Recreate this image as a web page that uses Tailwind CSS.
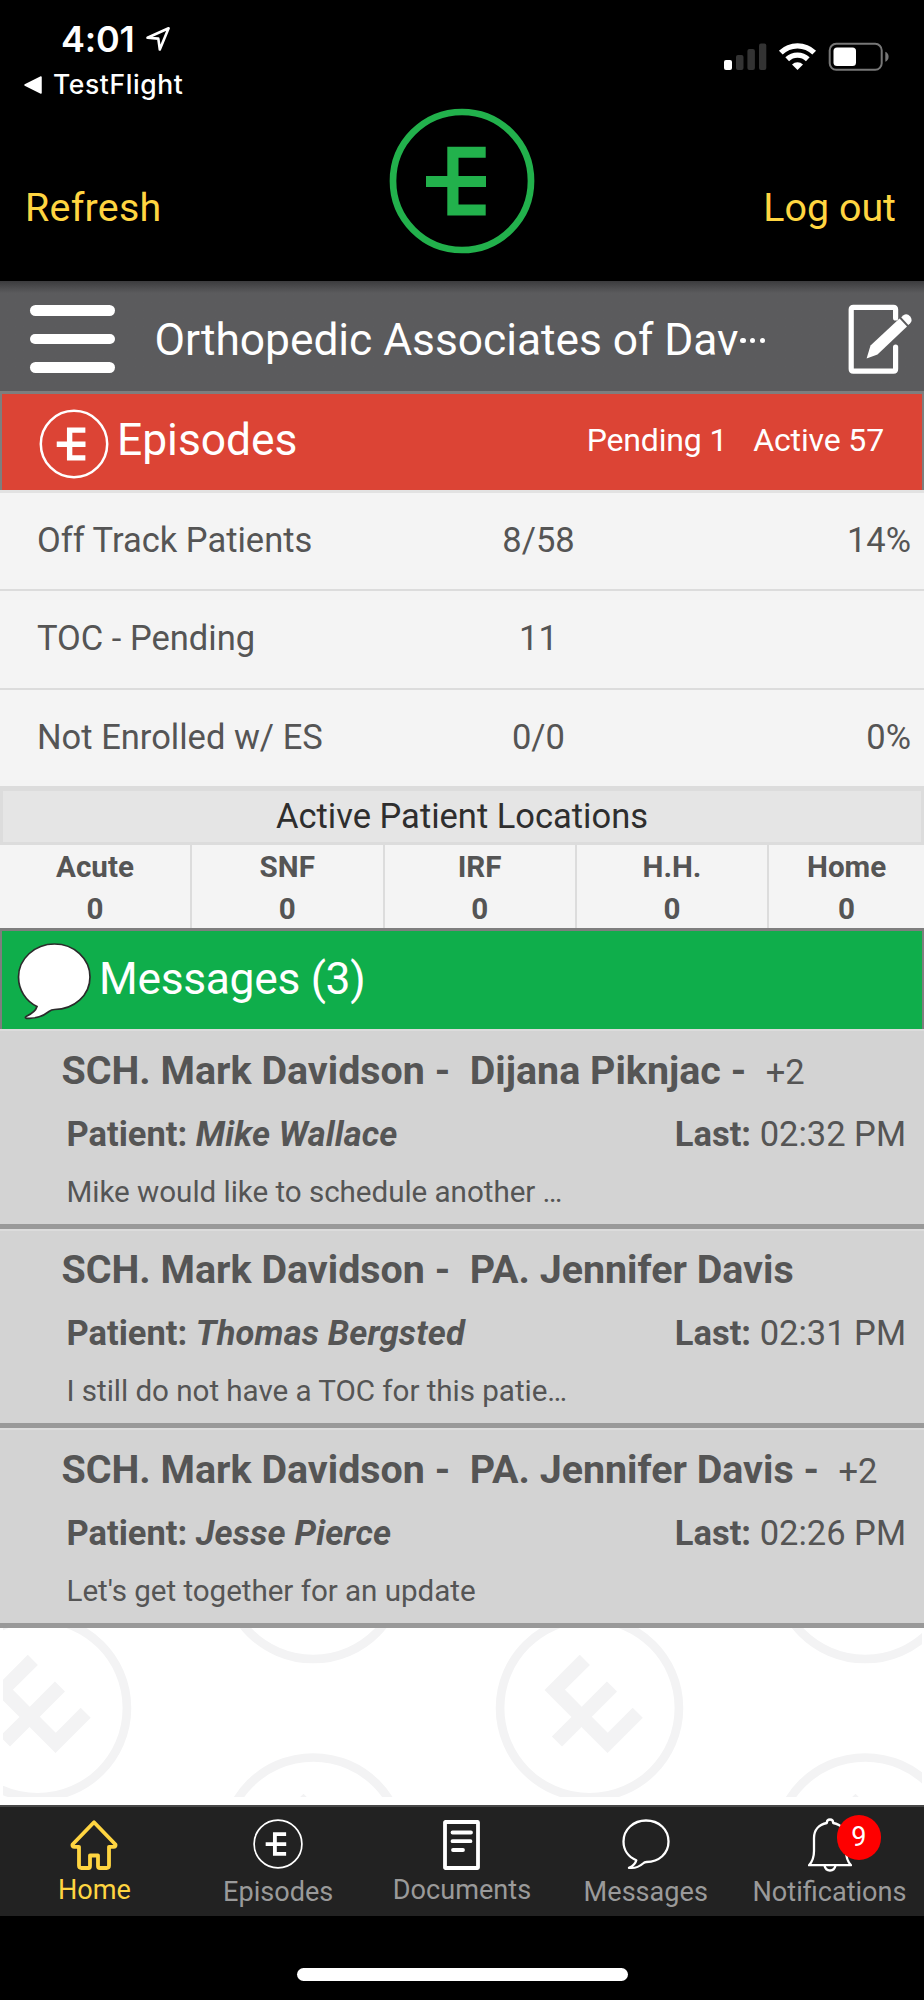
<!DOCTYPE html>
<html lang="en">
<head>
<meta charset="utf-8">
<title>Episodes</title>
<script src="https://cdn.jsdelivr.net/npm/@tailwindcss/browser@4"></script>
</head>
<body class="w-[924px] h-[2000px] overflow-hidden bg-black font-['Roboto',sans-serif] text-[#555] text-[34.5px] leading-none">
<svg class="hidden">
  <symbol id="mark" viewBox="-73 -73 146 146" overflow="visible">
    <path d="M-14.7-34.3H23.7V-23.3H-3.5V-5H24V6H-3.5V23.4H23.7V34.4H-14.7V6H-36V-5H-14.7Z" fill="currentColor"/>
  </symbol>
</svg>
<div class="flex flex-col h-[2000px]">
  <header class="h-[281px] shrink-0 bg-black text-white flex flex-col">
    <div class="h-[105px] flex justify-between">
      <div class="font-['Inter',sans-serif] pt-[18.5px] pl-6">
        <div class="flex items-center pl-[37px] h-10">
          <span class="text-[36px] font-semibold w-[84px] whitespace-nowrap tracking-[-0.2px]">4:01</span>
          <svg class="w-[26px] h-[26px]" viewBox="0 0 26 26"><path d="M2.5 11.8 23.6 2.3 14.8 23.5 13.3 12.6Z" fill="none" stroke="#fff" stroke-width="2.6" stroke-linejoin="round"/></svg>
        </div>
        <div class="flex items-center h-[52px] gap-[11px]">
          <svg class="w-[18px] h-[18px]" viewBox="0 0 18 18"><path d="M1 9 17 1V17Z" fill="#fff" stroke="#fff" stroke-width="1.5" stroke-linejoin="round"/></svg>
          <span class="text-[26.5px] font-medium tracking-[0.6px]">TestFlight</span>
        </div>
      </div>
      <div class="flex pt-[42px] pr-[34px]">
        <svg class="w-[166px] h-[30px]" viewBox="0 0 166 30">
          <rect x="0" y="18" width="8" height="10" rx="2" fill="#fff"/>
          <g fill="#333"><rect x="12" y="13" width="7.5" height="15" rx="2"/><rect x="23.4" y="7" width="7.5" height="21" rx="2"/><rect x="35" y="1.5" width="7.3" height="26.5" rx="2"/></g>
          <g fill="none" stroke="#fff" stroke-width="5.4"><path d="M56.8 10.6A24 24 0 0 1 90.2 10.6"/><path d="M63.2 17.2A15 15 0 0 1 83.8 17.2"/></g>
          <path d="M73.5 28 68 22.5A8 8 0 0 1 79 22.5Z" fill="#fff"/>
          <rect x="105.7" y="1.8" width="52" height="26" rx="6.5" fill="none" stroke="#777" stroke-width="2"/>
          <rect x="109.5" y="5.5" width="22.5" height="18.5" rx="3.5" fill="#fff"/>
          <path d="M161.3 9.8Q164.6 11.2 164.6 14.8T161.3 19.8Z" fill="#777"/>
        </svg>
      </div>
    </div>
    <div class="grow grid grid-cols-3 text-[39.4px] text-[#ffd541]">
      <span class="pt-[83px] pl-[25px] tracking-[0.25px]">Refresh</span>
      <span class="flex justify-center pt-[3px]">
        <svg class="w-[146px] h-[146px] text-[#22b14c]" viewBox="-73 -73 146 146"><circle r="69" fill="none" stroke="currentColor" stroke-width="6.7"/><use href="#mark" x="-73" y="-73" width="146" height="146"/></svg>
      </span>
      <span class="pt-[83px] pr-[28px] text-right">Log out</span>
    </div>
  </header>

  <div class="h-[110px] shrink-0 bg-linear-to-b from-[#3c3c3e] to-[#5b5b5d] to-[12px] text-white flex items-center pl-[30px] pr-[11px]">
    <div class="flex flex-col gap-[17.5px] w-[84.5px] pt-[6px]">
      <i class="h-[10.7px] rounded-full bg-white"></i><i class="h-[10.7px] rounded-full bg-white"></i><i class="h-[10.7px] rounded-full bg-white"></i>
    </div>
    <div class="pl-[40px] pt-[8px] grow text-[44.35px] whitespace-nowrap flex"><span class="tracking-[-0.05px]">Orthopedic Associates of Dav</span><span class="flex gap-[4.2px] pl-[2px] pt-[20px]"><i class="size-[5.4px] rounded-full bg-white"></i><i class="size-[5.4px] rounded-full bg-white"></i><i class="size-[5.4px] rounded-full bg-white"></i></span></div>
    <svg class="w-[65px] h-[70px] mt-[5px]" viewBox="0 0 65 70">
      <path d="M47.6 14V5.5Q47.6 3.4 45.5 3.4H5.3Q3.2 3.4 3.2 5.5V65Q3.2 67.1 5.3 67.1H45.5Q47.6 67.1 47.6 65V43" fill="none" stroke="#fff" stroke-width="5.2" stroke-linecap="round"/>
      <path d="M18.6 54.5 22.5 41.5 51.5 14.5 59 22.5 29.5 50.5Z" fill="#fff"/>
      <path d="M53.2 13.2 55.5 11.2Q59 9 62.3 12.5 65 16.5 62.2 19.3L60.3 21.1Z" fill="#fff"/>
    </svg>
  </div>

  <div class="h-[99px] shrink-0 bg-[#dc4435] border-[#7e7e7e] border-x-[2.5px] border-t-[3px] text-white flex items-center">
    <svg class="w-[70px] h-[70px] ml-[37px] mt-[3px]" viewBox="-35 -35 70 70"><circle r="33.2" fill="none" stroke="#fff" stroke-width="2.5"/><use href="#mark" x="-35" y="-35" width="70" height="70"/></svg>
    <span class="text-[44.35px] ml-[8px] -mt-[4px]">Episodes</span>
    <span class="text-[32px] ml-auto mr-[38px] -mt-[5px] flex gap-[26px] tracking-[-0.15px]"><span>Pending 1</span><span>Active 57</span></span>
  </div>

  <div class="h-[296px] shrink-0 bg-[#f4f4f4] border-t-[3px] border-[#e2e2e2] flex flex-col">
    <div class="h-[98px] grid grid-cols-[399px_278px_1fr] items-center pl-[37px] pr-[13px] pb-[2px] border-b-2 border-[#dcdcdc]"><span>Off Track Patients</span><span class="pl-[1px] w-[204px] text-center">8/58</span><span class="text-right">14%</span></div>
    <div class="h-[99px] grid grid-cols-[399px_278px_1fr] items-center pl-[37px] pr-[13px] pb-[2px] border-b-2 border-[#dcdcdc]"><span>TOC - Pending</span><span class="pl-[1px] w-[204px] text-center">11</span></div>
    <div class="h-[96px] grid grid-cols-[399px_278px_1fr] items-center pl-[37px] pr-[13px] pb-[2px]"><span>Not Enrolled w/ ES</span><span class="pl-[1px] w-[204px] text-center">0/0</span><span class="text-right">0%</span></div>
  </div>

  <div class="h-[59px] shrink-0 bg-[#e5e5e5] border-[3px] border-t-[5px] border-[#dcdcdc] text-[#2e2e2e] flex items-center justify-center pb-[1px]">Active Patient Locations</div>
  <div class="h-[83px] shrink-0 bg-[#f4f4f4] grid grid-cols-[192px_192.5px_192.3px_192.4px_1fr] text-center font-bold text-[29.6px] leading-[41.6px]">
    <div class="border-r-2 border-[#dcdcdc] pt-[2px] h-[83px]">Acute<br>0</div>
    <div class="border-r-2 border-[#dcdcdc] pt-[2px] h-[83px]">SNF<br>0</div>
    <div class="border-r-2 border-[#dcdcdc] pt-[2px] h-[83px]">IRF<br>0</div>
    <div class="border-r-2 border-[#dcdcdc] pt-[2px] h-[83px]">H.H.<br>0</div>
    <div class="pt-[2px] h-[83px]">Home<br>0</div>
  </div>

  <div class="h-[101px] shrink-0 bg-[#0fae4b] border-[#7e7e7e] border-x-[2.5px] border-t-[3px] text-white flex items-center">
    <svg class="w-[74px] h-[78px] ml-[14.5px] mt-[1px]" viewBox="0 0 74 78"><path d="M37.5 2C57 2 73 16.5 73 35S57 67.5 37.5 67.5Q34.5 67.5 32 69.5C25 75 18 77 9.5 76.3 8 76 8 75 9.5 74.2Q18.5 70 20 64.5C8.5 59 1.5 47.5 1.5 35 1.5 17 17.5 2 37.5 2Z" fill="#fff" stroke="#2b2b2b" stroke-width="1.7"/></svg>
    <span class="text-[44.35px] ml-[8.5px] -mt-[1px] tracking-[-0.3px]">Messages (3)</span>
  </div>

  <div class="h-[599px] shrink-0 grid grid-rows-3 bg-[#d3d3d3]">
    <div class="border-t-2 border-t-[#dcdcdc] border-b-[5px] border-b-[#999] pl-[61.5px] pr-[18px]">
      <div class="h-[79px] flex items-center text-[39.4px] font-bold"><span class="whitespace-pre">SCH. Mark Davidson -  Dijana Piknjac -  <span class="font-normal text-[34.5px]">+2</span></span></div>
      <div class="h-[48px] flex items-center justify-between pl-[5px] font-bold"><span>Patient: <i class="tracking-[0.15px]">Mike Wallace</i></span><span>Last: <span class="font-normal">02:32 PM</span></span></div>
      <div class="h-[70px] flex items-center text-[29.6px] pl-[5px] tracking-[-0.04px]">Mike would like to schedule another …</div>
    </div>
    <div class="border-t-2 border-t-[#dcdcdc] border-b-[5px] border-b-[#999] pl-[61.5px] pr-[18px]">
      <div class="h-[79px] flex items-center text-[39.4px] font-bold"><span class="whitespace-pre">SCH. Mark Davidson -  PA. Jennifer Davis</span></div>
      <div class="h-[48px] flex items-center justify-between pl-[5px] font-bold"><span>Patient: <i class="tracking-[0.15px]">Thomas Bergsted</i></span><span>Last: <span class="font-normal">02:31 PM</span></span></div>
      <div class="h-[68px] flex items-center text-[29.6px] pl-[5px] tracking-[-0.04px]">I still do not have a TOC for this patie…</div>
    </div>
    <div class="border-t-2 border-t-[#dcdcdc] border-b-[5px] border-b-[#999] pl-[61.5px] pr-[18px]">
      <div class="h-[79px] flex items-center text-[39.4px] font-bold"><span class="whitespace-pre">SCH. Mark Davidson -  PA. Jennifer Davis -  <span class="font-normal text-[34.5px]">+2</span></span></div>
      <div class="h-[48px] flex items-center justify-between pl-[5px] font-bold"><span>Patient: <i class="tracking-[0.15px]">Jesse Pierce</i></span><span>Last: <span class="font-normal">02:26 PM</span></span></div>
      <div class="h-[68px] flex items-center text-[29.6px] pl-[5px] tracking-[-0.04px]">Let's get together for an update</div>
    </div>
  </div>

  <div class="h-[177px] shrink-0 bg-white px-[2.5px]">
    <svg class="w-[919px] h-[169px] text-[#f3f3f4]" viewBox="2.5 0 919 169">
      <defs><g id="wm"><circle r="69" fill="none" stroke="currentColor" stroke-width="6.7"/><use href="#mark" x="-73" y="-73" width="146" height="146"/></g></defs>
      <use href="#wm" transform="translate(37 80) scale(1.296) rotate(-45)"/>
      <use href="#wm" transform="translate(589 80) scale(1.296) rotate(-45)"/>
      <use href="#wm" transform="translate(312.7 -58.4) scale(1.296) rotate(-45)"/>
      <use href="#wm" transform="translate(864.7 -58.4) scale(1.296) rotate(-45)"/>
      <use href="#wm" transform="translate(312.7 218.9) scale(1.296) rotate(-45)"/>
      <use href="#wm" transform="translate(864.7 218.9) scale(1.296) rotate(-45)"/>
    </svg>
  </div>

  <nav class="h-[111px] shrink-0 bg-[#222] border-t-2 border-[#484848] grid grid-cols-5 px-[2.6px] text-[27.1px] text-[#9a9a9a]">
    <div class="flex flex-col items-center text-[#ffd541]">
      <svg class="w-[52px] h-[54px] mt-[11px]" viewBox="0 0 52 54"><path d="M26 4.3 4.5 26.5Q4 28.8 6.5 28.8H11V47.5Q11 50 13.5 50H20.5Q22 50 22 48V37.5H30V48Q30 50 32 50H38.5Q41 50 41 47.5V28.8H45.5Q48 28.8 47.5 26.5Z" fill="none" stroke="currentColor" stroke-width="3.8" stroke-linejoin="round"/></svg>
      <span class="mt-[5px]">Home</span>
    </div>
    <div class="flex flex-col items-center">
      <svg class="w-[50px] h-[50px] mt-[12px] text-white" viewBox="-25 -25 50 50"><circle r="23.9" fill="none" stroke="#fff" stroke-width="1.7"/><use href="#mark" x="-25" y="-25" width="50" height="50"/></svg>
      <span class="mt-[10px]">Episodes</span>
    </div>
    <div class="flex flex-col items-center">
      <svg class="w-[37px] h-[50px] mt-[13px]" viewBox="0 0 37 50" fill="none" stroke="#fff"><rect x="2" y="2" width="33" height="46" rx=".5" stroke-width="3.8"/><path d="M9.5 12.5H28M9.5 21.2H27.5M10 30H20" stroke-width="3.8" stroke-linecap="round"/></svg>
      <span class="mt-[7px]">Documents</span>
    </div>
    <div class="flex flex-col items-center">
      <svg class="w-[48px] h-[51px] mt-[12px]" viewBox="0 0 48 51"><path d="M24 1.5C37 1.5 46.5 10.5 46.5 22.5S37 43 24.5 43Q22.5 43 21 44.5C16.5 48.5 12.5 49.5 7 48.8 12 46.5 13.5 44.5 14.3 41.2 6.5 38 1.5 31 1.5 22.5 1.5 10.5 11.5 1.5 24 1.5Z" fill="none" stroke="#fff" stroke-width="2.3" stroke-linejoin="round"/></svg>
      <span class="mt-[9px]">Messages</span>
    </div>
    <div class="flex flex-col items-center relative">
      <svg class="w-[44px] h-[54px] mt-[11px]" viewBox="0 0 44 54" fill="none" stroke="#fff" stroke-width="2.3" stroke-linejoin="round"><path d="M18.8 5Q18.8 1.5 22 1.5T25.2 5C33 6.5 38 12 38 20V33Q38 42 43 47.2H1Q6 42 6 33V20C6 12 11 6.5 18.8 5Z"/><path d="M16.5 47.5Q17.5 52.5 22 52.5T27.5 47.5"/></svg>
      <span class="mt-[7px]">Notifications</span>
      <span class="absolute left-[99px] top-[8px] size-[44.5px] rounded-full bg-[#fe0000] text-white text-[27px] flex items-center justify-center">9</span>
    </div>
  </nav>
  <div class="h-[84px] shrink-0 bg-black flex justify-center pt-[52px]"><div class="w-[331px] h-[12.5px] rounded-full bg-white"></div></div>
</div>
</body>
</html>
